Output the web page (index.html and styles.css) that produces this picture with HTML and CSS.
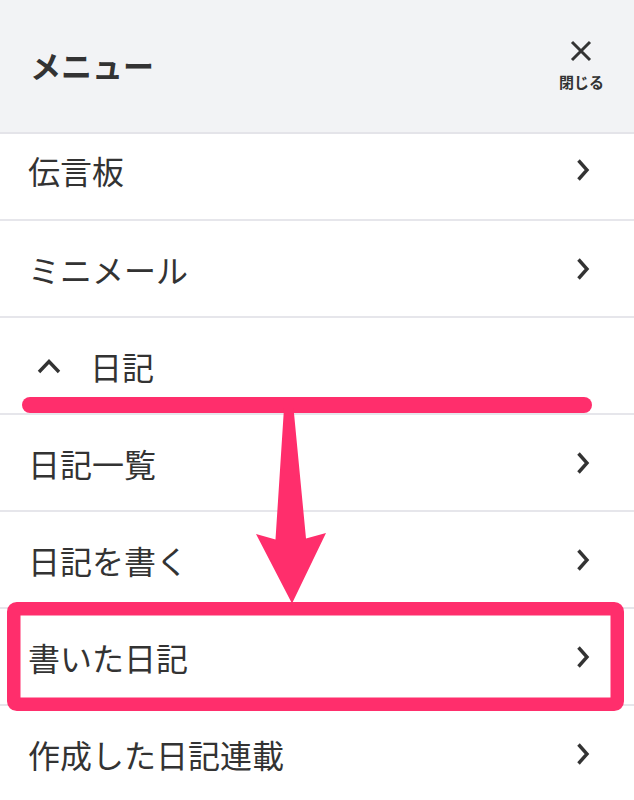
FILE: index.html
```html
<!DOCTYPE html>
<html lang="ja">
<head>
<meta charset="utf-8">
<title>メニュー</title>
<link rel="stylesheet" href="styles.css">
</head>
<body>
<div class="page">
  <header class="menu-header">
    <h1 class="menu-title">メニュー</h1>
    <button class="close-btn" type="button">
      <svg class="close-icon" width="22" height="22" viewBox="0 0 22 22"><path d="M2 2 L20 20 M20 2 L2 20" /></svg>
      <span class="close-label">閉じる</span>
    </button>
  </header>
  <ul class="menu-list">
    <li class="menu-item first"><span class="item-label">伝言板</span><svg class="chev" width="14" height="24" viewBox="0 0 14 24"><path d="M2.5 2.5 L11 12 L2.5 21.5" /></svg></li>
    <li class="menu-item"><span class="item-label">ミニメール</span><svg class="chev" width="14" height="24" viewBox="0 0 14 24"><path d="M2.5 2.5 L11 12 L2.5 21.5" /></svg></li>
    <li class="menu-item group"><svg class="chev-up" width="24" height="16" viewBox="0 0 24 16"><path d="M2 14 L12 3.5 L22 14" /></svg><span class="item-label">日記</span></li>
    <li class="menu-item"><span class="item-label">日記一覧</span><svg class="chev" width="14" height="24" viewBox="0 0 14 24"><path d="M2.5 2.5 L11 12 L2.5 21.5" /></svg></li>
    <li class="menu-item"><span class="item-label">日記を書く</span><svg class="chev" width="14" height="24" viewBox="0 0 14 24"><path d="M2.5 2.5 L11 12 L2.5 21.5" /></svg></li>
    <li class="menu-item"><span class="item-label">書いた日記</span><svg class="chev" width="14" height="24" viewBox="0 0 14 24"><path d="M2.5 2.5 L11 12 L2.5 21.5" /></svg></li>
    <li class="menu-item"><span class="item-label">作成した日記連載</span><svg class="chev" width="14" height="24" viewBox="0 0 14 24"><path d="M2.5 2.5 L11 12 L2.5 21.5" /></svg></li>
  </ul>
  <svg class="annotation" width="634" height="800" viewBox="0 0 634 800">
    <rect x="22" y="397" width="570" height="16" rx="8" ry="8" />
    <polygon points="284,408 293.5,408 306,538.5 326,533 292,603.5 256,534 275.5,539.5" />
    <rect class="box" x="13.75" y="608.75" width="603.5" height="95.5" rx="3" ry="3" />
  </svg>
</div>
</body>
</html>
```

FILE: styles.css
```css
* { box-sizing: border-box; }
html, body { margin: 0; padding: 0; background: #ffffff; }
body {
  font-family: "Noto Sans CJK JP", "Noto Sans", sans-serif;
  color: #333333;
}
.page {
  position: relative;
  width: 634px;
  height: 800px;
  overflow: hidden;
}
.menu-header {
  height: 134px;
  background: #f2f3f5;
  border-bottom: 2px solid #e4e4e9;
  display: flex;
  align-items: center;
  justify-content: space-between;
  padding: 0 30px 0 30px;
}
.menu-title {
  margin: -4px 0 0 0;
  font-size: 31px;
  font-weight: 700;
  line-height: 1;
  color: #333333;
  letter-spacing: 0;
}
.close-btn {
  display: flex;
  flex-direction: column;
  align-items: center;
  gap: 11px;
  background: none;
  border: 0;
  padding: 0;
  margin: -2px 0 0 0;
  font-family: inherit;
  color: #333333;
}
.close-icon path {
  stroke: #333333;
  stroke-width: 3;
  fill: none;
}
.close-label {
  font-size: 15px;
  font-weight: 700;
  line-height: 18px;
}
.menu-list {
  list-style: none;
  margin: 0;
  padding: 0;
}
.menu-item {
  height: 97px;
  border-bottom: 2px solid #e6e6eb;
  display: flex;
  align-items: center;
  justify-content: space-between;
  padding: 0 44px 0 28px;
}
.menu-item.first {
  height: 87px;
  padding-bottom: 14px;
}
.menu-item.group {
  justify-content: flex-start;
  padding-left: 37px;
  gap: 29px;
}
.item-label {
  font-size: 32px;
  line-height: 1;
  color: #333333;
}
.chev path, .chev-up path {
  stroke: #333333;
  stroke-width: 3.4;
  fill: none;
  stroke-linecap: butt;
  stroke-linejoin: miter;
}
.annotation {
  position: absolute;
  top: 0;
  left: 0;
  pointer-events: none;
}
.annotation rect, .annotation polygon {
  fill: #ff2e6c;
}
.annotation rect.box {
  fill: none;
  stroke: #ff2e6c;
  stroke-width: 13.5;
}
```
